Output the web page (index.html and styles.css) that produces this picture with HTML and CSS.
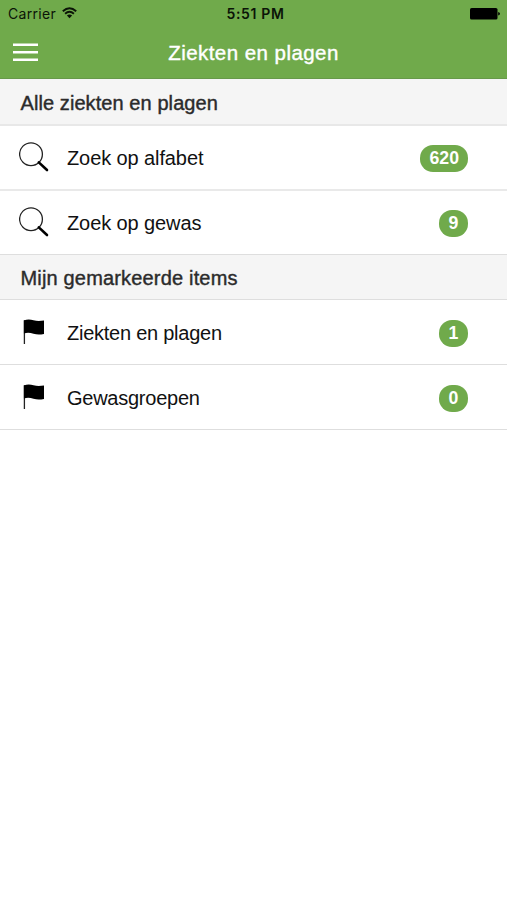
FILE: index.html
```html
<!DOCTYPE html>
<html lang="nl">
<head>
<meta charset="utf-8">
<title>Ziekten en plagen</title>
<link rel="stylesheet" href="styles.css">
</head>
<body>
<svg class="symbols" width="0" height="0">
  <symbol id="search" viewBox="0 0 30 30">
    <circle cx="12" cy="12.2" r="11.400" fill="none" stroke="#222" stroke-width="1.3"/>
    <path d="M19.8 20.4L28 28" fill="none" stroke="#000" stroke-width="2.6" stroke-linecap="round"/>
  </symbol>
  <symbol id="flag" viewBox="0 0 22 26">
    <path d="M1.400 1.2V25" fill="none" stroke="#222" stroke-width="1.3"/>
    <path d="M.9 1.4C4 .1 7.200 .2 10.500 1.200C14 2.200 17 2 21 1.500V15C17 15.800 14 15.900 10.500 14.800C7 13.700 4 13.500 .9 14.600Z" fill="#000"/>
  </symbol>
</svg>
<header class="top">
  <div class="status">
    <span class="carrier">Carrier
      <svg class="wifi" width="15" height="12" viewBox="0 0 15 12">
        <g fill="none" stroke="#0b1407" stroke-width="1.9">
          <path d="M.8 4.200Q7.500 -1.900 14.200 4.200"/>
          <path d="M3.100 6.800Q7.500 2.900 11.900 6.800"/>
        </g>
        <path d="M4.900 8.500Q7.500 6.300 10.100 8.500L7.500 11.200Z" fill="#0b1407"/>
      </svg>
    </span>
    <span class="time">5:51 PM</span>
    <svg class="battery" width="30" height="12" viewBox="0 0 30 12">
      <rect x="0" y="0" width="27.500" height="11.600" rx="1.600"/>
      <path d="M28.200 4Q30 4.500 30 5.800T28.200 7.600Z"/>
    </svg>
  </div>
  <div class="nav">
    <svg class="menu" width="25" height="19" viewBox="0 0 25 19">
      <path d="M0 1.800H25M0 9.300H25M0 16.800H25" stroke="#fff" stroke-width="2.600"/>
    </svg>
    <h1 class="title">Ziekten en plagen</h1>
  </div>
</header>
<main>
  <h2 class="section">Alle ziekten en plagen</h2>
  <div class="row first"><svg class="search"><use href="#search"/></svg><span class="label">Zoek op alfabet</span><span class="badge">620</span></div>
  <div class="row second"><svg class="search"><use href="#search"/></svg><span class="label">Zoek op gewas</span><span class="badge">9</span></div>
  <h2 class="section marked">Mijn gemarkeerde items</h2>
  <div class="row saved"><svg class="flag"><use href="#flag"/></svg><span class="label tight">Ziekten en plagen</span><span class="badge">1</span></div>
  <div class="row saved"><svg class="flag"><use href="#flag"/></svg><span class="label tight">Gewasgroepen</span><span class="badge">0</span></div>
</main>
</body>
</html>
```
FILE: styles.css
```css
* { box-sizing: border-box; }
body {
  margin: 0;
  background: #fff;
  color: #111;
  font-family: "Liberation Sans", Arial, sans-serif;
}
.symbols { display: none; }
.top {
  height: 79px;
  background: #70aa4b;
  border-bottom: 1px solid #67994a;
}
.status {
  display: grid;
  grid-template-columns: 1fr auto 1fr;
  align-items: center;
  height: 27px;
  padding: 0 7px 0 8px;
  font-family: Inter, sans-serif;
  font-size: 14px;
  color: #0b1407;
}
.carrier { display: flex; align-items: center; gap: 6px; letter-spacing: .3px; }
.wifi { margin-bottom: 2px; }
.time { margin-left: 3px; font-weight: 600; letter-spacing: .65px; }
.battery { justify-self: end; }
.nav {
  display: grid;
  grid-template-columns: 1fr auto 1fr;
  align-items: center;
  height: 52px;
  padding: 0 13px;
}
.title {
  margin: 0;
  font-size: 20.5px;
  font-weight: 400;
  letter-spacing: .45px;
  color: #fff;
  -webkit-text-stroke: .4px #fff;
}
.menu { margin-bottom: 1px; }
.section {
  display: flex;
  align-items: center;
  height: 47px;
  margin: 0;
  padding: 4px 20px 0 20.5px;
  background: #f5f5f5;
  border-bottom: 2px solid #e8e8e8;
  font-size: 20px;
  font-weight: 400;
  letter-spacing: .08px;
  color: #2b2b2b;
  -webkit-text-stroke: .4px #2b2b2b;
}
.marked {
  height: 45px;
  padding-top: 2px;
  border-bottom: 1px solid #dedede;
  letter-spacing: .17px;
}
.row {
  display: flex;
  align-items: center;
  height: 65px;
  padding: 1px 39px 0 19px;
  border-bottom: 1px solid #dedede;
}
.first { border-bottom: 2px solid #e9e9e9; }
.second { height: 64px; }
.saved { padding-top: 3px; }
.search { width: 30px; height: 30px; margin-bottom: 2px; }
.flag { width: 22px; height: 26px; margin: 0 4px 4px; }
.label { flex: 1; margin-left: 18px; font-size: 20px; letter-spacing: -.1px; }
.tight { letter-spacing: -.25px; }
.badge {
  min-width: 29px;
  padding: 0 9px;
  border-radius: 13px;
  background: #70aa4b;
  color: #fff;
  font-size: 17.7px;
  font-weight: 700;
  line-height: 27px;
  text-align: center;
}
```
